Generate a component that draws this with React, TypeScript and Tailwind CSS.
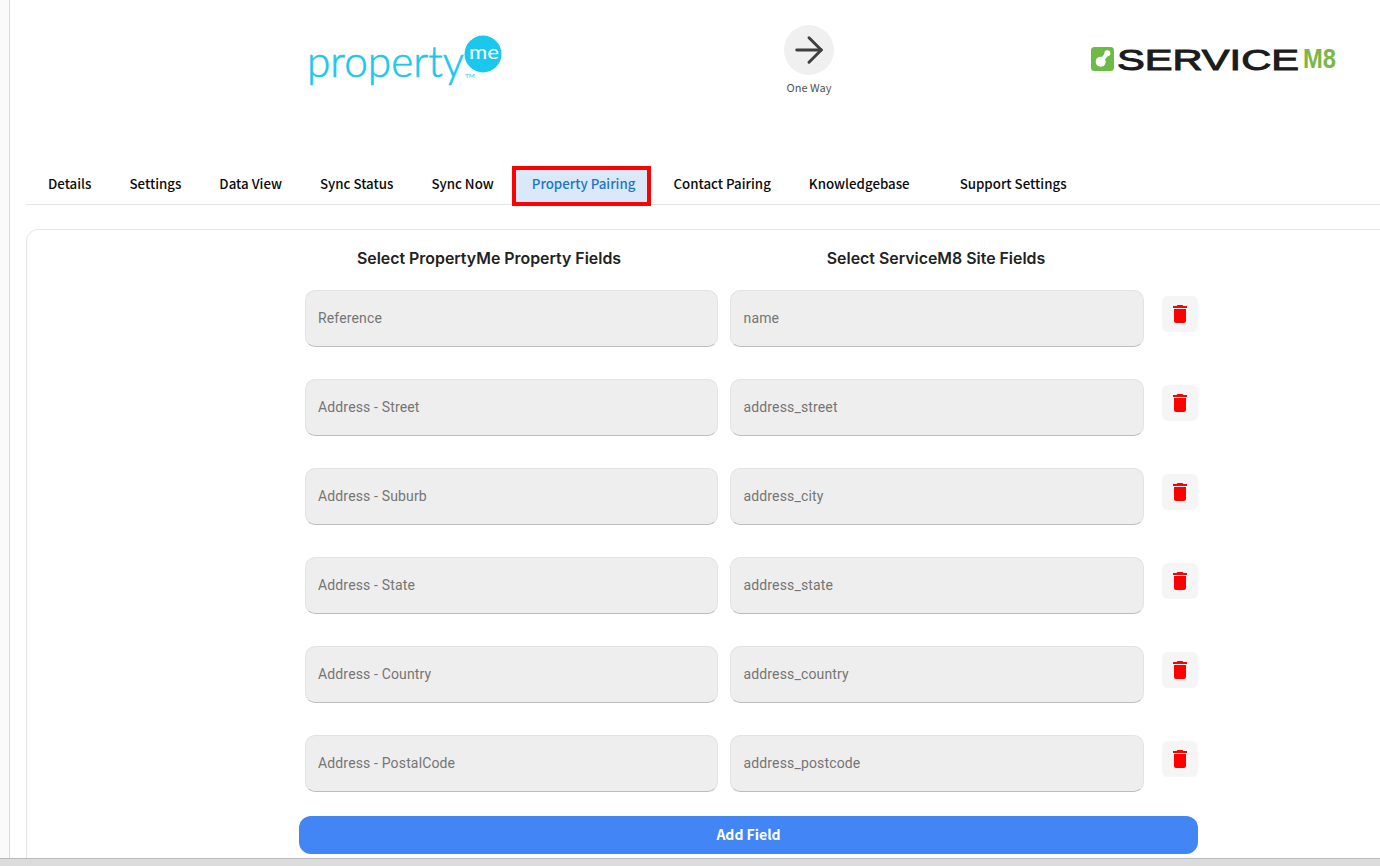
import { ArrowRight } from "lucide-react";

const tabs = ["Details", "Settings", "Data View", "Sync Status", "Sync Now"];

const pairs = [
  ["Reference", "name"],
  ["Address - Street", "address_street"],
  ["Address - Suburb", "address_city"],
  ["Address - State", "address_state"],
  ["Address - Country", "address_country"],
  ["Address - PostalCode", "address_postcode"],
];

const tabFont = "font-['Noto_Sans_CJK_SC',sans-serif] text-[13.3px] font-medium";

function PropertyMeLogo() {
  return (
    <svg width="196" height="60" viewBox="0 0 196 60" className="block">
      <text
        x="-1"
        y="43"
        textLength="157"
        lengthAdjust="spacingAndGlyphs"
        fill="#1ac8ee"
        stroke="#1ac8ee"
        strokeWidth="0.6"
        fontFamily="Lato, sans-serif"
        fontWeight="300"
        fontSize="43"
      >
        property
      </text>
      <circle cx="175" cy="20" r="18.5" fill="#1ac8ee" />
      <text
        x="161"
        y="25"
        textLength="30"
        lengthAdjust="spacingAndGlyphs"
        fill="#ffffff"
        fontFamily="Lato, sans-serif"
        fontWeight="400"
        fontSize="19"
      >
        me
      </text>
      <text x="157" y="44" fill="#1ac8ee" fontFamily="Lato, sans-serif" fontSize="6.5">
        TM
      </text>
    </svg>
  );
}

function ServiceM8Logo() {
  return (
    <svg width="248" height="36" viewBox="0 0 248 36" className="block">
      <rect x="1" y="2" width="23" height="24" rx="3.5" fill="#6cbb45" />
      <circle cx="10.7" cy="16.7" r="5" fill="#ffffff" />
      <circle cx="17.3" cy="8.3" r="3" fill="#ffffff" />
      <path d="M11 16L17 9" stroke="#ffffff" strokeWidth="4" />
      <text
        x="27"
        y="25"
        textLength="182"
        lengthAdjust="spacingAndGlyphs"
        fill="#1c1c1c"
        stroke="#1c1c1c"
        strokeWidth="1"
        fontFamily="'Liberation Sans', sans-serif"
        fontWeight="400"
        fontSize="30"
      >
        SERVICE
      </text>
      <text
        x="213"
        y="23"
        textLength="33"
        lengthAdjust="spacingAndGlyphs"
        fill="#7ab648"
        fontFamily="'Liberation Sans', sans-serif"
        fontWeight="700"
        fontSize="27"
      >
        M8
      </text>
    </svg>
  );
}

function TrashButton() {
  return (
    <button className="ml-[18px] mt-[6px] flex h-9 w-9 items-center justify-center rounded-md bg-[#f5f5f5]">
      <svg width="24" height="24" viewBox="0 0 24 24" fill="#ff0000">
        <path d="M6 19c0 1.1.9 2 2 2h8c1.1 0 2-.9 2-2V7H6v12zM19 4h-3.5l-1-1h-5l-1 1H5v2h14V4z" />
      </svg>
    </button>
  );
}

function Field({ value, wide }: { value: string; wide?: boolean }) {
  return (
    <div
      className={`flex h-[57px] items-center rounded-[10px] border border-[#e3e3e3] border-b-[#bdbdbd] bg-[#eeeeee] font-['Roboto',sans-serif] text-[14px] tracking-[0.15px] text-[#757575] ${
        wide ? "w-[414px] pl-[12.5px]" : "w-[413px] pl-3"
      }`}
    >
      {value}
    </div>
  );
}

export default function App() {
  return (
    <div className="flex h-[866px] w-[1380px] flex-col overflow-hidden bg-white">
      <div className="flex min-h-0 flex-1">
        <div className="w-[10px] shrink-0 border-r border-[#d5dbe3] bg-[#fafafa]" />
        <main className="min-w-0 flex-1 overflow-hidden pl-4">
          <header className="flex h-[166px] items-start">
            <div className="ml-[282px] mt-[34px]">
              <PropertyMeLogo />
            </div>
            <div className="ml-[280px] mt-[25px] flex w-[50px] flex-col items-center">
              <div className="flex h-[50px] w-[50px] items-center justify-center rounded-full bg-[#f0f0f0]">
                <ArrowRight size={42} strokeWidth={1.7} color="#3f3f3f" />
              </div>
              <span className="mt-[4px] whitespace-nowrap font-['Noto_Sans_CJK_SC',sans-serif] text-[11px] leading-4 text-[#555555]">
                One Way
              </span>
            </div>
            <div className="ml-[256px] mt-[45px]">
              <ServiceM8Logo />
            </div>
          </header>

          <nav className="-mr-4 flex h-[39px] items-start border-b border-[#e2e4e8]">
            {tabs.map((label, i) => (
              <div
                key={label}
                className={`flex h-[35px] items-center px-[19px] ${i === 0 ? "ml-[3px]" : ""} ${tabFont} text-[#0a0a0a]`}
              >
                {label}
              </div>
            ))}
            <div
              className={`-ml-px flex h-10 items-center border-4 border-[#ff0000] bg-[#dbe8f9] pb-1 pl-4 pr-3 ${tabFont} text-[#1976d2]`}
            >
              Property Pairing
            </div>
            <div className={`ml-[3px] flex h-[35px] items-center px-[19px] ${tabFont} text-[#0a0a0a]`}>Contact Pairing</div>
            <div className={`flex h-[35px] items-center pl-[19px] pr-[31px] ${tabFont} text-[#0a0a0a]`}>Knowledgebase</div>
            <div className={`flex h-[35px] items-center px-[19px] ${tabFont} text-[#0a0a0a]`}>Support Settings</div>
          </nav>

          <section className="-mr-4 mt-6 h-[700px] rounded-t-[12px] border border-[#e2e4e8] pl-[272px] pt-[17px]">
            <div className="flex font-['Inter',sans-serif] text-[15.9px] font-semibold leading-6 text-[#222222]">
              <h2 className="w-[380px] text-center">Select PropertyMe Property Fields</h2>
              <h2 className="w-[514px] text-center">Select ServiceM8 Site Fields</h2>
            </div>
            <div className="ml-[6px] mt-[19px] flex flex-col gap-8">
              {pairs.map(([a, b]) => (
                <div key={a} className="flex items-start gap-3">
                  <Field value={a} />
                  <Field value={b} wide />
                  <div className="-ml-3">
                    <TrashButton />
                  </div>
                </div>
              ))}
            </div>
            <button className="mt-6 flex h-[38px] w-[899px] items-center justify-center rounded-xl bg-[#4285f4] pb-[2px] font-['Noto_Sans_CJK_SC',sans-serif] text-[14px] font-bold text-white">
              Add Field
            </button>
          </section>
        </main>
      </div>
      <div className="h-2 shrink-0 border-t border-[#b9b9b9] bg-[#dcdcdc]" />
    </div>
  );
}
